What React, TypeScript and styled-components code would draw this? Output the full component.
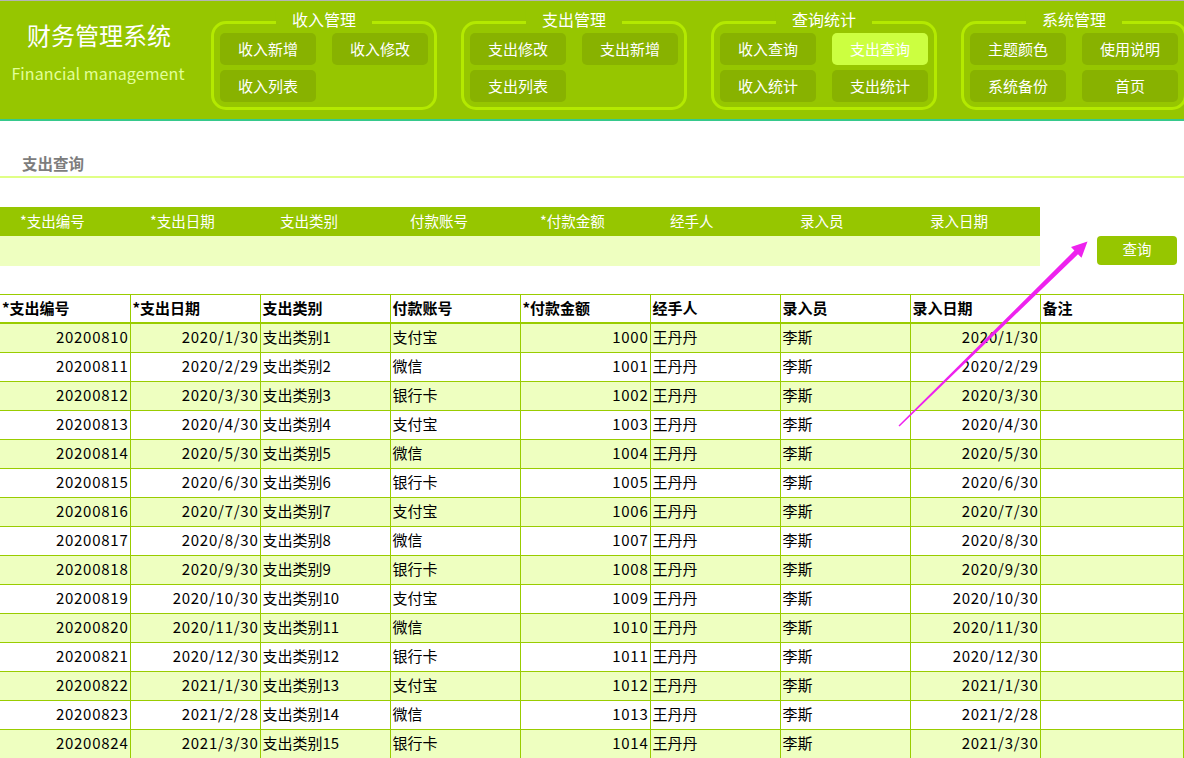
import styled, { createGlobalStyle } from "styled-components";

const GlobalStyle = createGlobalStyle`
  html, body {
    margin: 0;
    padding: 0;
    overflow: hidden;
    background: #fff;
  }
  body {
    font-family: "Noto Sans CJK SC", "Noto Sans", sans-serif;
    color: #000;
  }
`;

const green = "#96c600";
const lightRow = "#eeffc0";
const grid = "#99cc00";

const Page = styled.div`
  position: relative;
  width: 1184px;
  height: 758px;
  overflow: hidden;
`;

const Header = styled.header`
  display: flex;
  align-items: flex-start;
  height: 118px;
  background: ${green};
  border-top: 1px solid #b4b4b4;
  border-bottom: 2px solid #36c98c;
  overflow: hidden;
`;

const Logo = styled.div`
  width: 196px;
  flex-shrink: 0;
  display: flex;
  flex-direction: column;
  align-items: center;
  padding-top: 18px;
`;

const LogoTitle = styled.div`
  margin-left: 2px;
  font-size: 24px;
  line-height: 32px;
  color: #fff;
`;

const LogoSub = styled.div`
  margin-top: 11px;
  font-size: 16px;
  line-height: 22px;
  letter-spacing: 0.1px;
  color: #e2ff9a;
`;

const Groups = styled.div`
  display: flex;
  gap: 24px;
  margin-left: 15px;
  margin-top: 20px;
  flex-shrink: 0;
`;

const Group = styled.div`
  position: relative;
  width: 226px;
  height: 89px;
  box-sizing: border-box;
  border: 3px solid #b4e900;
  border-radius: 15px;
  padding: 9px 6px 0 6px;
  display: grid;
  grid-template-columns: 96px 96px;
  grid-auto-rows: 32px;
  align-content: start;
  column-gap: 16px;
  row-gap: 5px;
`;

const GroupTitle = styled.div`
  position: absolute;
  top: -15px;
  left: 50%;
  transform: translateX(-50%);
  padding: 0 16px;
  background: ${green};
  color: #fff;
  font-size: 16px;
  line-height: 20px;
  white-space: nowrap;
`;

const NavButton = styled.div<{ $active?: boolean }>`
  display: flex;
  align-items: center;
  justify-content: center;
  padding-bottom: 2px;
  box-sizing: border-box;
  border-radius: 5px;
  background: ${({ $active }) => ($active ? "#ccff40" : "#88b200")};
  color: #fff;
  font-size: 15px;
`;

const SectionTitle = styled.div`
  margin-top: 30px;
  padding: 0 0 1px 22px;
  font-size: 15.5px;
  font-weight: bold;
  line-height: 24px;
  color: #7d7d7d;
  border-bottom: 2px solid #e0ff86;
`;

const QueryArea = styled.div`
  display: flex;
  align-items: flex-end;
  margin-top: 29px;
`;

const QueryForm = styled.div`
  width: 1040px;
`;

const QueryHead = styled.div`
  display: grid;
  grid-template-columns: repeat(8, 130px);
  height: 29px;
  background: ${green};
`;

const QueryLabel = styled.div`
  padding-left: 20px;
  color: #fff;
  font-size: 14.5px;
  line-height: 27px;
`;

const QueryInputs = styled.div`
  height: 30px;
  background: ${lightRow};
`;

const QueryButton = styled.button`
  display: flex;
  align-items: center;
  justify-content: center;
  margin-left: 57px;
  margin-bottom: 1px;
  width: 80px;
  height: 29px;
  box-sizing: border-box;
  padding: 0 0 5px 0;
  border: none;
  border-radius: 4px;
  background: ${green};
  color: #fff;
  font-family: inherit;
  font-size: 14.5px;
`;

const Table = styled.table`
  margin-top: 28px;
  width: 1184px;
  border-collapse: collapse;
  table-layout: fixed;
  font-size: 15px;
`;

const Th = styled.th`
  height: 24px;
  padding: 0 0 3px 2px;
  text-align: left;
  font-weight: bold;
  border-top: 1px solid ${grid};
  border-bottom: 2px solid ${grid};
  border-right: 1px solid ${grid};
  white-space: nowrap;
  overflow: hidden;
`;

const Tr = styled.tr<{ $alt: boolean }>`
  background: ${({ $alt }) => ($alt ? lightRow : "#fff")};
`;

const Td = styled.td<{ $num?: boolean }>`
  height: 25px;
  padding: ${({ $num }) => ($num ? "0 1px 3px 0" : "0 0 3px 2px")};
  text-align: ${({ $num }) => ($num ? "right" : "left")};
  letter-spacing: ${({ $num }) => ($num ? "0.75px" : "0")};
  border-bottom: 1px solid ${grid};
  border-right: 1px solid ${grid};
  white-space: nowrap;
  overflow: hidden;
`;

const Arrow = styled.svg`
  position: absolute;
  left: 0;
  top: 0;
  pointer-events: none;
`;

const groups = [
  { title: "收入管理", items: ["收入新增", "收入修改", "收入列表"] },
  { title: "支出管理", items: ["支出修改", "支出新增", "支出列表"] },
  { title: "查询统计", items: ["收入查询", "支出查询", "收入统计", "支出统计"] },
  { title: "系统管理", items: ["主题颜色", "使用说明", "系统备份", "首页"] },
];

const fields = ["*支出编号", "*支出日期", "支出类别", "付款账号", "*付款金额", "经手人", "录入员", "录入日期"];

const dates = [
  "2020/1/30", "2020/2/29", "2020/3/30", "2020/4/30", "2020/5/30", "2020/6/30",
  "2020/7/30", "2020/8/30", "2020/9/30", "2020/10/30", "2020/11/30", "2020/12/30",
  "2021/1/30", "2021/2/28", "2021/3/30",
];
const accounts = ["支付宝", "微信", "银行卡"];

const rows = dates.map((d, i) => ({
  id: String(20200810 + i),
  date: d,
  type: "支出类别" + (i + 1),
  account: accounts[i % 3],
  amount: String(1000 + i),
  handler: "王丹丹",
  clerk: "李斯",
  entry: d,
}));

export default function App() {
  return (
    <Page>
      <GlobalStyle />
      <Header>
        <Logo>
          <LogoTitle>财务管理系统</LogoTitle>
          <LogoSub>Financial management</LogoSub>
        </Logo>
        <Groups>
          {groups.map((g) => (
            <Group key={g.title}>
              <GroupTitle>{g.title}</GroupTitle>
              {g.items.map((it) => (
                <NavButton key={it} $active={it === "支出查询"}>
                  {it}
                </NavButton>
              ))}
            </Group>
          ))}
        </Groups>
      </Header>

      <SectionTitle>支出查询</SectionTitle>

      <QueryArea>
        <QueryForm>
          <QueryHead>
            {fields.map((f) => (
              <QueryLabel key={f}>{f}</QueryLabel>
            ))}
          </QueryHead>
          <QueryInputs />
        </QueryForm>
        <QueryButton>查询</QueryButton>
      </QueryArea>

      <Table>
        <colgroup>
          {fields.map((f) => (
            <col key={f} style={{ width: 130 }} />
          ))}
          <col />
        </colgroup>
        <thead>
          <tr>
            {fields.map((f) => (
              <Th key={f}>{f}</Th>
            ))}
            <Th>备注</Th>
          </tr>
        </thead>
        <tbody>
          {rows.map((r, i) => (
            <Tr key={r.id} $alt={i % 2 === 0}>
              <Td $num>{r.id}</Td>
              <Td $num>{r.date}</Td>
              <Td>{r.type}</Td>
              <Td>{r.account}</Td>
              <Td $num>{r.amount}</Td>
              <Td>{r.handler}</Td>
              <Td>{r.clerk}</Td>
              <Td $num>{r.entry}</Td>
              <Td />
            </Tr>
          ))}
        </tbody>
      </Table>

      <Arrow width="1184" height="758" viewBox="0 0 1184 758">
        <polygon
          fill="#ee22ee"
          points="898.5,425.5 1074.4,250.6 1071.0,247.0 1087.5,241.5 1081.5,257.8 1078.0,254.2 899.5,426.5"
        />
      </Arrow>
    </Page>
  );
}
